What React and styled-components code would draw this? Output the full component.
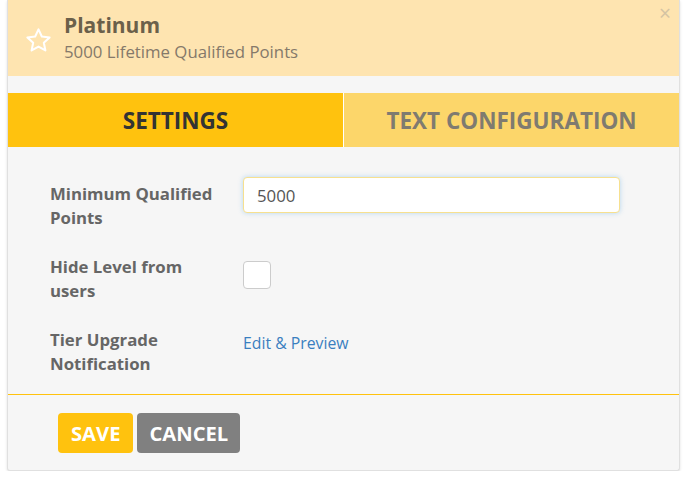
import styled, { createGlobalStyle } from "styled-components";

const GlobalStyle = createGlobalStyle`
  body {
    margin: 0;
    background: #fff;
    font-family: "Open Sans", "Noto Sans", sans-serif;
  }
`;

function App() {
  return (
    <>
      <GlobalStyle />
      <Modal>
        <Header>
          <Star viewBox="0 0 24 24">
            <path
              d="M12 2.8l2.75 5.9 6.45.75-4.8 4.4 1.3 6.35L12 17l-5.7 3.2 1.3-6.35-4.8-4.4 6.45-.75z"
              fill="none"
              stroke="#fff"
              strokeWidth="1.7"
              strokeLinejoin="round"
            />
          </Star>
          <HeaderText>
            <Title>Platinum</Title>
            <Subtitle>5000 Lifetime Qualified Points</Subtitle>
          </HeaderText>
          <Close>×</Close>
        </Header>
        <Tabs>
          <Tab active>SETTINGS</Tab>
          <Tab>TEXT CONFIGURATION</Tab>
        </Tabs>
        <Body>
          <Row>
            <Label>Minimum Qualified Points</Label>
            <Input defaultValue="5000" />
          </Row>
          <Row>
            <Label>Hide Level from users</Label>
            <Check />
          </Row>
          <Row>
            <Label>Tier Upgrade Notification</Label>
            <Link>Edit &amp; Preview</Link>
          </Row>
        </Body>
        <Footer>
          <Button kind="save">SAVE</Button>
          <Button>CANCEL</Button>
        </Footer>
      </Modal>
    </>
  );
}

export default App;

const Modal = styled.div`
  margin-left: 7px;
  width: 671px;
  background: #f6f6f6;
  border: 1px solid #e0e0e0;
  border-top: none;
  box-shadow: 0 1px 3px rgba(0, 0, 0, 0.12);
  border-radius: 0 0 3px 3px;
`;

const Header = styled.div`
  position: relative;
  display: flex;
  align-items: center;
  height: 76px;
  padding-left: 16px;
  background: #fee4b0;
  box-sizing: border-box;
`;

const Star = styled.svg`
  width: 29px;
  height: 29px;
  margin-top: 4px;
  margin-right: 11px;
`;

const HeaderText = styled.div`
  display: flex;
  flex-direction: column;
  margin-top: -3px;
`;

const Title = styled.div`
  font-size: 21px;
  font-weight: 700;
  color: #6b604a;
  line-height: 28px;
`;

const Subtitle = styled.div`
  font-size: 16.8px;
  color: #85796a;
  line-height: 22px;
  margin-top: 2px;
`;

const Close = styled.span`
  position: absolute;
  top: 1px;
  right: 8px;
  font-size: 21px;
  color: #d4c3a3;
  line-height: 24px;
`;

const Tabs = styled.div`
  display: flex;
  margin-top: 17px;
  height: 54px;
`;

const Tab = styled.div`
  flex: 1;
  display: flex;
  align-items: center;
  justify-content: center;
  font-size: 22.5px;
  font-weight: 700;
  background: ${(p) => (p.active ? "#ffc20e" : "#fcd66a")};
  color: ${(p) => (p.active ? "#333" : "#7f7b70")};
  border-right: ${(p) => (p.active ? "1px solid #fff" : "none")};
`;

const Body = styled.div`
  display: flex;
  flex-direction: column;
  gap: 25px;
  padding: 35px 0 18px 42px;
  border-bottom: 1px solid #ffc20e;
`;

const Row = styled.div`
  display: flex;
  align-items: flex-start;
`;

const Label = styled.div`
  width: 193px;
  padding-right: 22px;
  box-sizing: border-box;
  font-size: 16.8px;
  font-weight: 700;
  line-height: 24px;
  color: #666;
`;

const Input = styled.input`
  width: 377px;
  height: 36px;
  margin-top: -5px;
  box-sizing: border-box;
  padding: 0 13px;
  border: 1px solid #f7e08f;
  border-radius: 4px;
  background: #fff;
  font-family: inherit;
  font-size: 16.8px;
  color: #555;
  box-shadow: 0 0 5px rgba(102, 175, 233, 0.45);
  outline: none;
`;

const Check = styled.div`
  width: 28px;
  height: 28px;
  margin-top: 6px;
  box-sizing: border-box;
  border: 1px solid #ccc;
  border-radius: 4px;
  background: #fff;
`;

const Link = styled.a`
  font-size: 15.8px;
  line-height: 24px;
  color: #3a7fc0;
  margin-top: 3px;
  cursor: pointer;
`;

const Footer = styled.div`
  display: flex;
  gap: 4px;
  padding: 18px 0 17px 50px;
`;

const Button = styled.button`
  height: 40px;
  padding: 0 ${(p) => (p.kind === "save" ? "13px" : "12px")};
  border: none;
  border-radius: 4px;
  font-family: inherit;
  font-size: 20.2px;
  font-weight: 700;
  color: #fff;
  background: ${(p) => (p.kind === "save" ? "#ffc20e" : "#808080")};
`;
